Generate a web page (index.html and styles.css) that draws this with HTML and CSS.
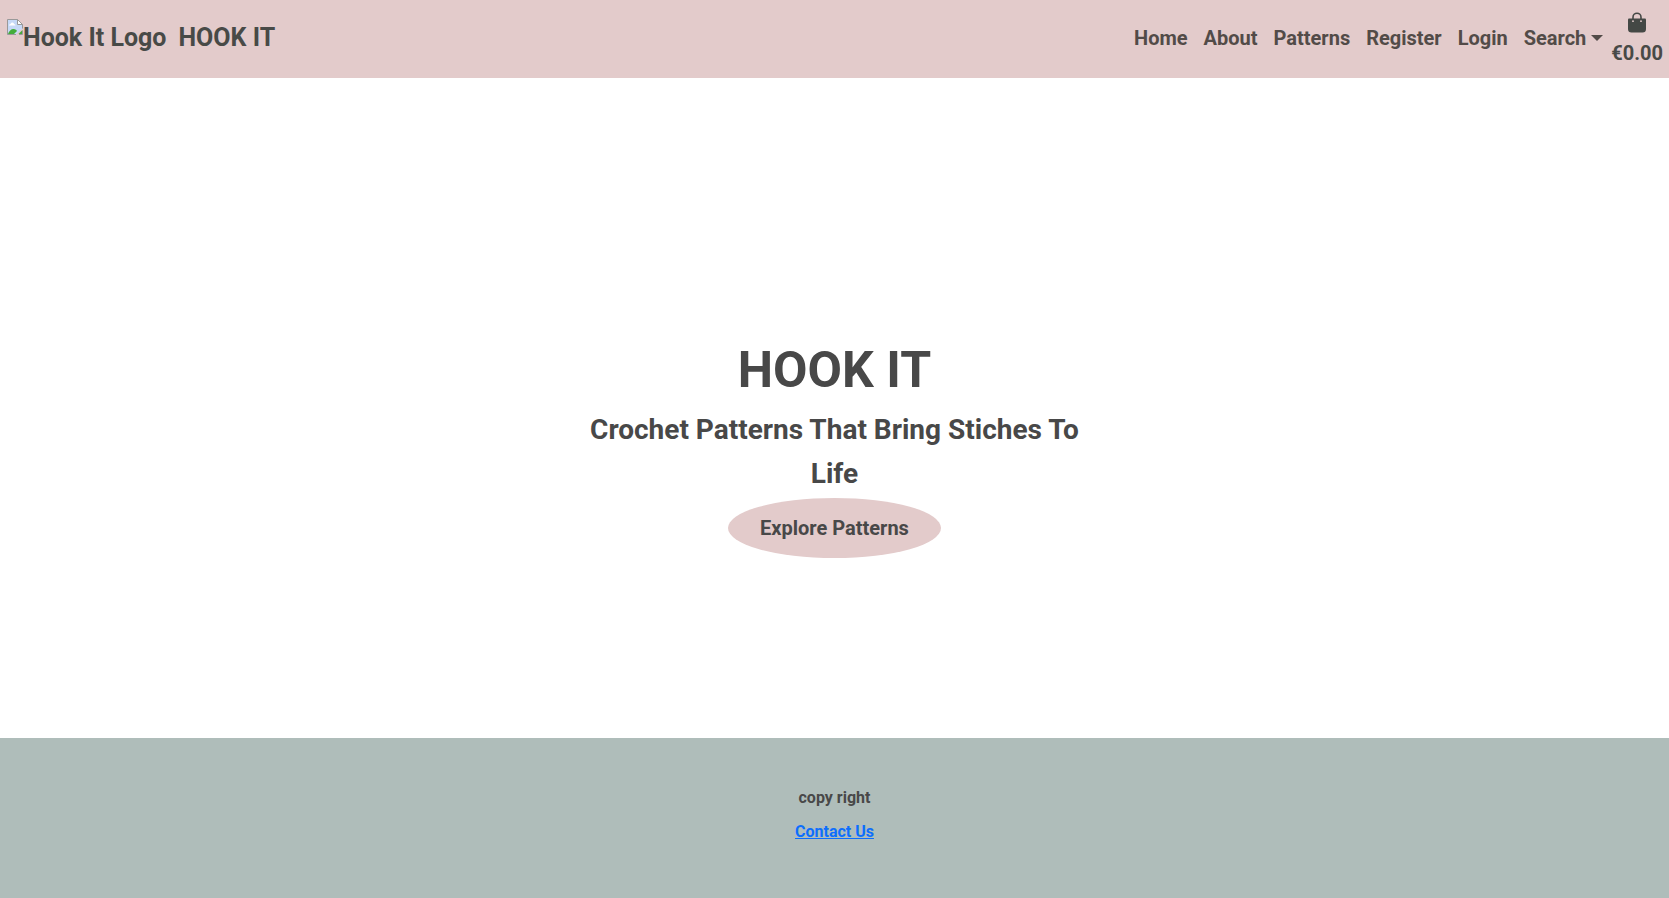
FILE: index.html
```html
<!DOCTYPE html>
<html lang="en">
<head>
<meta charset="utf-8">
<meta name="viewport" content="width=device-width, initial-scale=1">
<title>Hook It</title>
<link rel="stylesheet" href="styles.css">
</head>
<body>
<header class="navbar">
  <a class="brand" href="#">
    <span class="logo">
      <svg class="logo-icon" viewBox="0 0 16 16" aria-hidden="true">
        <path d="M.5.5h10l5 5v4L9 15.500H.5z" fill="#c6d9f7"/>
        <path d="M2 6.500q0-1.500 1.500-1.500.5-2 2-1.500 1.500 0 1.500 1.500 1.500 0 1.500 1.500z" fill="#fff"/>
        <path d="M1 15c1-3 3-5 5.500-5 2 0 3 1 3.500 2l-3 3z" fill="#44ad3a"/>
        <path d="M11.500 15l4-4v4z" fill="#44ad3a"/>
        <path d="M9 15.500H.5V.5h10l5 5v4M15.500 12v3.500H12" fill="none" stroke="#999"/>
        <path d="M10.500.5v5h5z" fill="#fff" stroke="#999"/>
      </svg><span>Hook It Logo</span>
    </span>
    <span>HOOK IT</span>
  </a>
  <nav class="nav">
    <a class="nav-link" href="#">Home</a>
    <a class="nav-link" href="#">About</a>
    <a class="nav-link" href="#">Patterns</a>
    <a class="nav-link" href="#">Register</a>
    <a class="nav-link" href="#">Login</a>
    <button class="nav-link search" type="button">Search<span class="caret"></span></button>
    <a class="bag" href="#" aria-label="Shopping bag, €0.00">
      <svg class="bag-icon" viewBox="0 0 18 21" aria-hidden="true">
        <path d="M5 9V5.200a4 4 0 0 1 8 0V9" fill="none" stroke="#444845" stroke-width="1.600"/>
        <path d="M1 6.500h16q1 0 1 1V17q0 3.500-3.500 3.500h-11Q0 20.500 0 17V7.500q0-1 1-1z" fill="#444845"/>
        <circle cx="5" cy="9.200" r=".9" fill="#e3cbcb"/>
        <circle cx="13" cy="9.200" r=".9" fill="#e3cbcb"/>
      </svg>
      <span>€0.00</span>
    </a>
  </nav>
</header>
<main class="hero">
  <div class="hero-content">
    <h1 class="title">HOOK IT</h1>
    <p class="tagline">Crochet Patterns That Bring Stiches To Life</p>
    <a class="explore" href="#">Explore Patterns</a>
  </div>
</main>
<footer class="footer">
  <p class="copy">copy right</p>
  <a class="contact" href="#">Contact Us</a>
</footer>
</body>
</html>
```
FILE: styles.css
```css
* { box-sizing: border-box; }
body {
  display: flex;
  flex-direction: column;
  min-height: 100vh;
  margin: 0;
  background: #fff;
  color: #484848;
  font: bold 16px/24px Roboto, sans-serif;
}
a { color: inherit; text-decoration: none; }
.navbar {
  display: flex;
  align-items: center;
  justify-content: space-between;
  padding: 8px 6px 10px 7px;
  background: #e3cbcb;
}
.brand {
  display: flex;
  gap: 12px;
  color: #484a47;
  font-size: 25px;
  line-height: 38px;
}
.logo { display: flex; }
.logo-icon { width: 16px; height: 16px; }
.nav {
  display: flex;
  align-items: center;
  gap: 16px;
  color: #524b48;
  font-size: 20px;
  line-height: 30px;
}
.nav-link { color: inherit; font: inherit; }
.search {
  display: flex;
  align-items: center;
  gap: 5px;
  padding: 0;
  border: 0;
  background: none;
}
.caret {
  border: 6px solid transparent;
  border-top-color: currentColor;
  border-bottom: 0;
}
.bag {
  display: flex;
  flex-direction: column;
  align-items: center;
  margin-left: -8px;
  color: #484a47;
}
.bag-icon { width: 18px; height: 21px; margin: 4px 0 5px; }
.hero {
  flex: 1;
  display: flex;
  align-items: center;
  justify-content: center;
  padding-top: 82px;
}
.hero-content {
  max-width: 500px;
  text-align: center;
}
.title {
  margin: 0 0 8px;
  font-size: 50px;
  line-height: 60px;
}
.tagline {
  margin: 0 0 2px;
  font-size: 28px;
  line-height: 44px;
}
.explore {
  display: inline-block;
  padding: 15px 32px;
  border-radius: 50%;
  background: #e3cbcb;
  font-size: 20px;
  line-height: 30px;
}
.footer {
  display: flex;
  flex-direction: column;
  align-items: center;
  gap: 10px;
  padding: 48px 16px 54px;
  background: #afbdba;
}
.copy { margin: 0; }
.contact { color: #0d6efd; text-decoration: underline; }
```
